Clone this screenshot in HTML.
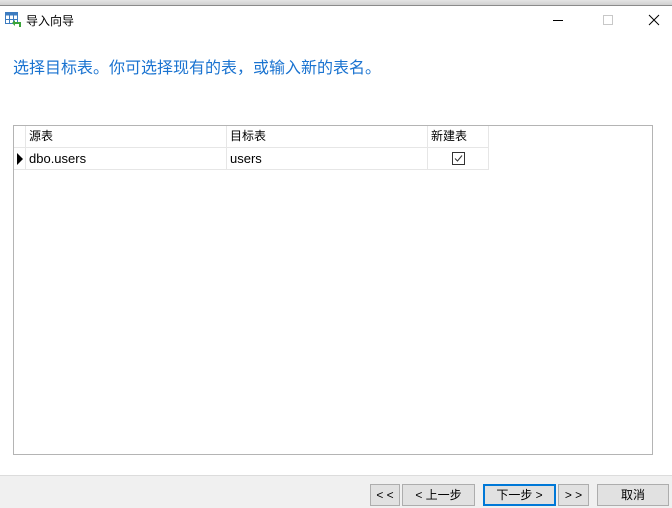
<!DOCTYPE html>
<html><head><meta charset="utf-8"><style>
*{margin:0;padding:0;box-sizing:border-box}
body{width:672px;height:508px;background:#fff;position:relative;overflow:hidden;font-family:"Liberation Sans","Noto Sans CJK SC",sans-serif;font-size:12px;color:#000}
.a{position:absolute}
.btn{position:absolute;top:484px;height:22px;border:1px solid #adadad;background:#e1e1e1;text-align:center;line-height:20px;font-size:12px}
.cell{position:absolute;border-right:1px solid #e6e6e6;border-bottom:1px solid #e6e6e6;padding-left:3px;font-size:12px}
</style></head><body>
<div class="a" style="left:0;top:0;width:672px;height:5px;background:linear-gradient(#e4e4e4,#d0d0d0)"></div>
<div class="a" style="left:0;top:5px;width:672px;height:1px;background:#8a8a8a"></div>
<svg class="a" style="left:5px;top:12px" width="16" height="16" viewBox="0 0 16 16">
<rect x="0.5" y="0.5" width="12" height="11" fill="#fff" stroke="#3d7cc0"/>
<rect x="0.5" y="0.5" width="12" height="3" fill="#3d7cc0"/>
<line x1="4.5" y1="3" x2="4.5" y2="12" stroke="#3d7cc0"/><line x1="8.5" y1="3" x2="8.5" y2="12" stroke="#3d7cc0"/>
<line x1="0" y1="7.5" x2="13" y2="7.5" stroke="#3d7cc0"/>
<path d="M15 15 V11 H9" fill="none" stroke="#3aa43a" stroke-width="2"/><path d="M7 11 L10 8 V14 Z" fill="#3aa43a"/>
</svg>
<div class="a" style="left:26px;top:12px;font-size:12px">导入向导</div>
<div class="a" style="left:553px;top:20px;width:10px;height:1px;background:#000"></div>
<div class="a" style="left:603px;top:15px;width:10px;height:10px;border:1px solid #c8c8c8"></div>
<svg class="a" style="left:648px;top:14px" width="12" height="12"><path d="M1 1L11 11M11 1L1 11" stroke="#000" stroke-width="1"/></svg>
<div class="a" style="left:13px;top:54px;font-size:16px;color:#1a73d0">选择目标表。你可选择现有的表，或输入新的表名。</div>
<div class="a" style="left:13px;top:125px;width:640px;height:330px;border:1px solid #b4b4b4;background:#fff"></div>
<div class="cell" style="left:14px;top:126px;width:12px;height:22px"></div>
<div class="cell" style="left:26px;top:126px;width:201px;height:22px;line-height:21px">源表</div>
<div class="cell" style="left:227px;top:126px;width:201px;height:22px;line-height:21px">目标表</div>
<div class="cell" style="left:428px;top:126px;width:61px;height:22px;line-height:21px">新建表</div>
<div class="cell" style="left:14px;top:148px;width:12px;height:22px"></div>
<div class="a" style="left:17px;top:153px;width:0;height:0;border-left:6px solid #000;border-top:6px solid transparent;border-bottom:6px solid transparent"></div>
<div class="cell" style="left:26px;top:148px;width:201px;height:22px;line-height:21px;font-size:13px">dbo.users</div>
<div class="cell" style="left:227px;top:148px;width:201px;height:22px;line-height:21px;font-size:13px">users</div>
<div class="cell" style="left:428px;top:148px;width:61px;height:22px"></div>
<svg class="a" style="left:452px;top:152px" width="13" height="13"><rect x="0.5" y="0.5" width="12" height="12" fill="#fff" stroke="#333"/><path d="M3 6.5L5.5 9L10 3.5" fill="none" stroke="#333"/></svg>
<div class="a" style="left:0;top:475px;width:672px;height:33px;background:#f0f0f0;border-top:1px solid #dcdcdc"></div>
<div class="btn" style="left:370px;width:30px">&lt; &lt;</div>
<div class="btn" style="left:402px;width:73px">&lt; 上一步</div>
<div class="btn" style="left:483px;width:73px;border:2px solid #0078d7;line-height:18px">下一步 &gt;</div>
<div class="btn" style="left:558px;width:31px">&gt; &gt;</div>
<div class="btn" style="left:597px;width:72px">取消</div>
</body></html>
